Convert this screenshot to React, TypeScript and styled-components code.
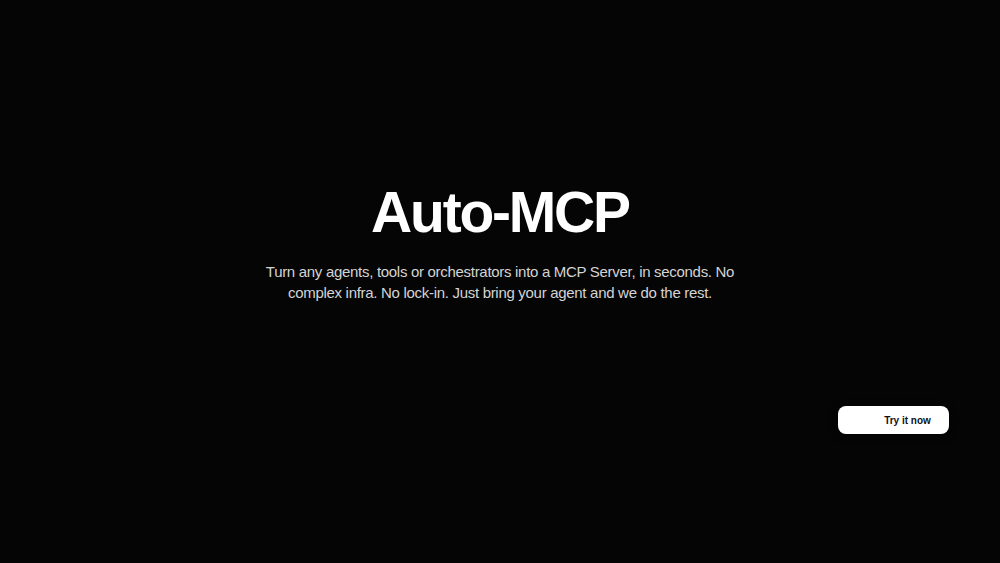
import styled, { createGlobalStyle } from "styled-components";

const Global = createGlobalStyle`
  html, body {
    margin: 0;
    padding: 0;
    background: #050505;
  }
  body {
    font-family: "Liberation Sans", Arial, sans-serif;
  }
`;

const Page = styled.main`
  position: relative;
  width: 100%;
  height: 563px;
  background: #050505;
  display: flex;
  flex-direction: column;
  align-items: center;
  padding-top: 178px;
  box-sizing: border-box;
`;

const Title = styled.h1`
  margin: 0;
  color: #fff;
  font-size: 57px;
  font-weight: 700;
  letter-spacing: -2.2px;
  line-height: 68px;
`;

const Lead = styled.p`
  margin: 15px 0 0;
  max-width: 480px;
  color: #d4d4d4;
  font-size: 15px;
  letter-spacing: -0.3px;
  line-height: 21px;
  text-align: center;
`;

const TryButton = styled.button`
  position: absolute;
  left: 838px;
  top: 406px;
  width: 111px;
  height: 28px;
  border: none;
  border-radius: 8px;
  background: #fff;
  color: #111;
  font-family: "Liberation Sans", Arial, sans-serif;
  font-size: 10px;
  font-weight: 700;
  padding: 0 0 0 28px;
  display: flex;
  align-items: center;
  justify-content: center;
  box-shadow: 0 2px 8px rgba(0, 0, 0, 0.4);
  cursor: pointer;
`;

export default function App() {
  return (
    <>
      <Global />
      <Page>
        <Title>Auto-MCP</Title>
        <Lead>
          Turn any agents, tools or orchestrators into a MCP Server, in seconds. No
          complex infra. No lock-in. Just bring your agent and we do the rest.
        </Lead>
        <TryButton>Try it now</TryButton>
      </Page>
    </>
  );
}
